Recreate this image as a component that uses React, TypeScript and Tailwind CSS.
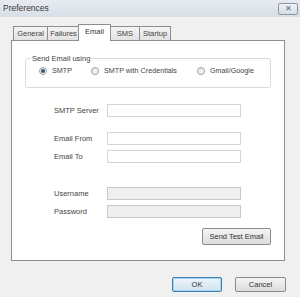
const FONT = { fontFamily: '"Liberation Sans", Arial, sans-serif' };

const TABS = [
  { label: "General", w: "w-[35px]" },
  { label: "Failures", w: "w-[33px]" },
  { label: "Email", w: "w-[33px]", active: true },
  { label: "SMS", w: "w-[30px]" },
  { label: "Startup", w: "w-[32px]" },
];

function Radio({ checked, label }: { checked?: boolean; label: string }) {
  return (
    <div className="flex items-center gap-[5px]">
      <span className="w-[8px] h-[8px] rounded-full border border-[#9aa0a6] bg-gradient-to-br from-[#e6e6e6] to-[#fafafa] flex items-center justify-center">
        {checked && <span className="w-[4px] h-[4px] rounded-full bg-[#2c5a78]" />}
      </span>
      <span className="text-[7.2px] leading-none text-[#444]">{label}</span>
    </div>
  );
}

function Field({ label, disabled, className = "" }: { label: string; disabled?: boolean; className?: string }) {
  return (
    <div className={`flex items-center h-[13px] ${className}`}>
      <span className="w-[53px] text-[7.5px] leading-none text-[#444]">{label}</span>
      <div
        className={`w-[134px] h-[13px] border ${
          disabled ? "bg-[#efefef] border-[#c8c8c8]" : "bg-white border-[#d2d4d8]"
        }`}
      />
    </div>
  );
}

export default function App() {
  return (
    <div className="w-[300px] h-[297px] bg-[#f0f0f0] flex flex-col select-none" style={FONT}>
      {/* Title bar */}
      <div className="h-[17px] flex items-start justify-between bg-gradient-to-b from-[#e6ebf0] to-[#d8dfe7]">
        <span className="pl-[3px] pt-[4px] text-[8.5px] leading-none text-[#3a3a3a]">Preferences</span>
        <div className="mt-[3px] mr-[2px] w-[20px] h-[12px] border border-[#8b97a5] rounded-[2px] bg-gradient-to-b from-[#eef1f5] to-[#d9dfe6] flex items-center justify-center text-[8px] leading-none text-[#5b6676]">
          ✕
        </div>
      </div>

      {/* Tabs */}
      <div className="flex items-end h-[23px] pl-[13px]">
        {TABS.map((t) =>
          t.active ? (
            <div
              key={t.label}
              className={`${t.w} h-[17px] -mb-px -mx-[1px] z-10 bg-white border border-b-0 border-[#8c8e94] flex items-start justify-center pt-[3px] text-[7.5px] leading-none text-[#333]`}
            >
              {t.label}
            </div>
          ) : (
            <div
              key={t.label}
              className={`${t.w} h-[14px] mr-[-1px] bg-gradient-to-b from-[#f4f4f4] to-[#e2e2e2] border border-b-0 border-[#8c8e94] flex items-center justify-center text-[7.5px] leading-none text-[#444]`}
            >
              {t.label}
            </div>
          )
        )}
      </div>

      {/* Panel */}
      <div className="ml-[11px] w-[274px] h-[221px] bg-white border border-[#8c8e94] flex flex-col">
        <fieldset className="ml-[13px] mt-[13px] w-[246px] h-[34px] border border-[#d5dbe0] rounded-[3px] px-0">
          <legend className="ml-[5px] px-[1px] text-[7.5px] leading-[9px] text-[#444]">Send Email using</legend>
          <div className="flex items-center h-[20px] pl-[13px] -mt-[2px]">
            <Radio checked label="SMTP" />
            <div className="ml-[19px]">
              <Radio label="SMTP with Credentials" />
            </div>
            <div className="ml-[20px]">
              <Radio label="Gmail/Google" />
            </div>
          </div>
        </fieldset>

        <div className="pl-[42px] flex flex-col">
          <Field label="SMTP Server" className="mt-[16px]" />
          <Field label="Email From" className="mt-[15px]" />
          <Field label="Email To" className="mt-[5px]" />
          <Field label="Username" disabled className="mt-[24px]" />
          <Field label="Password" disabled className="mt-[5px]" />
        </div>

        <div className="flex justify-end pr-[13px] mt-[10px]">
          <button className="w-[69px] h-[17px] border border-[#8a8a8a] rounded-[2px] bg-gradient-to-b from-[#f5f5f5] to-[#dcdcdc] text-[7.5px] leading-none text-[#333]">
            Send Test Email
          </button>
        </div>
      </div>

      {/* Bottom buttons */}
      <div className="flex justify-end gap-[13px] pr-[14px] mt-[16px]">
        <button className="w-[50px] h-[15px] border border-[#3c7fb1] rounded-[2px] bg-gradient-to-b from-[#eef5fb] to-[#cfe3f1] shadow-[inset_0_0_0_1px_#a6d3ef] text-[7.5px] leading-none text-[#333]">
          OK
        </button>
        <button className="w-[51px] h-[15px] border border-[#8a8a8a] rounded-[2px] bg-gradient-to-b from-[#f5f5f5] to-[#dcdcdc] text-[7.5px] leading-none text-[#333]">
          Cancel
        </button>
      </div>
    </div>
  );
}
